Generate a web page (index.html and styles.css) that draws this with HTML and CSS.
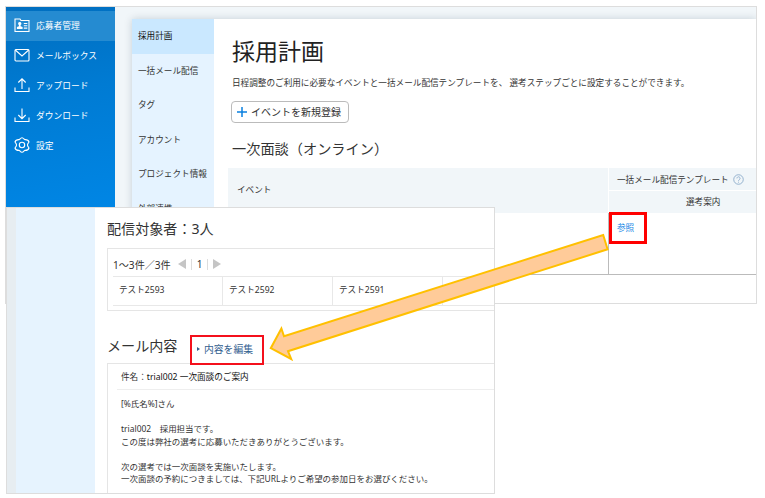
FILE: index.html
```html
<!DOCTYPE html>
<html lang="ja">
<head>
  <meta charset="UTF-8">
  <meta name="viewport" content="width=device-width, initial-scale=1.0">
  <title>採用計画</title>
  <link rel="stylesheet" href="styles.css">
</head>
<body>
  <div class="window plan">
    <nav class="sidebar">
      <a class="nav-item active">
        <svg viewBox="0 0 16 16"><path d="M1 2h5l1 1.5h8v11H1z"/><path d="M9.8 6.5h3.5M9.8 8.8h3.5M9.8 11.1h3.5"/><path class="solid" d="M5.7 5a1.6 1.6 0 0 1 .9 3v1.2l2 .8v2H2.9v-2l2-.8V8a1.6 1.6 0 0 1 .8-3z"/></svg>
        応募者管理
      </a>
      <a class="nav-item">
        <svg viewBox="0 0 16 16"><rect x="1" y="2.5" width="14" height="11.5" rx="1"/><path d="M1.3 3l6.7 6 6.7-6"/></svg>
        メールボックス
      </a>
      <a class="nav-item">
        <svg viewBox="0 0 16 16"><path d="M1 10.5v4h14v-4M8 12V2M4.3 5.5L8 1.8l3.7 3.7"/></svg>
        アップロード
      </a>
      <a class="nav-item">
        <svg viewBox="0 0 16 16"><path d="M1 10.5v4h14v-4M8 1.5v10M4.3 8L8 11.7 11.7 8"/></svg>
        ダウンロード
      </a>
      <a class="nav-item">
        <svg viewBox="0 0 16 16"><path d="M6 2Q8-.6 10 2L11 2.6Q14.3 2.5 15 5L13.6 7.2V8.8L15 11Q14.3 13.5 11 13.4L10 14Q8 16.6 6 14L5 13.4Q1.7 13.5 1 11L2.4 8.8V7.2L1 5Q1.7 2.5 5 2.6z"/><circle cx="8" cy="8" r="2.7"/></svg>
        設定
      </a>
    </nav>
    <div class="panel">
      <ul class="submenu">
        <li class="current">採用計画</li>
        <li>一括メール配信</li>
        <li>タグ</li>
        <li>アカウント</li>
        <li>プロジェクト情報</li>
        <li>外部連携</li>
      </ul>
      <main class="content">
        <h1>採用計画</h1>
        <p class="lead">日程調整のご利用に必要なイベントと一括メール配信テンプレートを、 選考ステップごとに設定することができます。</p>
        <button class="add-button">
          <svg viewBox="0 0 10 10"><path d="M5 0v10M0 5h10"/></svg>
          イベントを新規登録
        </button>
        <h2>一次面談（オンライン）</h2>
        <div class="event-table">
          <div class="event-head">イベント</div>
          <div class="template-head">
            <div class="template-title">一括メール配信テンプレート
              <svg viewBox="0 0 12 12"><circle cx="6" cy="6" r="5.2"/><path d="M4.3 4.8a1.7 1.7 0 1 1 2.6 1.4q-.9.5-.9 1.3M6 8.4v1"/></svg>
            </div>
            <div class="template-step">選考案内</div>
          </div>
          <div class="event-cell"></div>
          <div class="template-cell"><a class="link">参照</a></div>
        </div>
      </main>
    </div>
  </div>

  <div class="window mail">
    <div class="mail-side"></div>
    <div class="mail-main">
      <h3>配信対象者：3人</h3>
      <div class="targets">
        <div class="pager">
          <span>1～3件／3件</span>
          <i class="prev"></i>
          <span class="page">1</span>
          <i class="next"></i>
        </div>
        <div class="target-row">
          <span>テスト2593</span>
          <span>テスト2592</span>
          <span>テスト2591</span>
          <span></span>
        </div>
      </div>
      <div class="mail-heading">
        <h3>メール内容</h3>
        <a class="edit-link"><i></i>内容を編集</a>
      </div>
      <div class="mail-box">
        <div class="subject">件名：<b>trial002 一次面談のご案内</b></div>
        <div class="mail-text">[%氏名%]さん

trial002　採用担当です。
この度は弊社の選考に応募いただきありがとうございます。

次の選考では一次面談を実施いたします。
一次面談の予約につきましては、下記URLよりご希望の参加日をお選びください。</div>
      </div>
    </div>
  </div>

  <!-- highlight and arrow over both windows -->
  <div class="highlight"></div>
  <svg class="arrow" viewBox="0 0 765 498"><path d="M603.2 235L607.6 249.3 288 351.2 291.2 359 270.8 348.2 281.4 328.5 284 336.2z"/></svg>
</body>
</html>
```
FILE: styles.css
```css
* {
  box-sizing: border-box;
}
body {
  margin: 0;
  width: 765px;
  height: 498px;
  position: relative;
  overflow: hidden;
  background: #fff;
  color: #333;
  font-family: "Noto Sans", "Noto Sans CJK JP", sans-serif;
  font-size: 8.62px;
}
h1, h2, h3, p, ul {
  margin: 0;
  padding: 0;
  font-weight: normal;
}
svg {
  fill: none;
  stroke: currentColor;
  flex: none;
}
.window {
  position: absolute;
  display: flex;
  border: 1px solid #ddd;
  overflow: hidden;
}

/* plan window */
.plan {
  left: 5px;
  top: 6px;
  width: 752px;
  height: 298px;
  background: #f1f6f9;
}
.sidebar {
  width: 109px;
  padding-top: 4px;
  background: linear-gradient(170deg, #006ebf, #007bd3 30%, #0086e5 70%);
  color: #fff;
}
.nav-item {
  display: flex;
  align-items: center;
  gap: 6px;
  height: 30px;
  padding: 0 0 2px 8px;
  font-size: 8.75px;
  white-space: nowrap;
}
.nav-item svg {
  width: 16px;
  height: 16px;
  stroke-width: 1.1;
}
.nav-item.active {
  background: #258bd1;
}
.solid {
  fill: #fff;
  stroke: none;
}
.panel {
  display: flex;
  flex: 1;
  margin: 12px 0 0 17px;
  background: #fff;
  box-shadow: 0 0 8px rgba(0, 40, 60, .18);
}
.submenu {
  width: 82px;
  background: #e5f3ff;
  list-style: none;
}
.submenu li {
  height: 34.5px;
  padding-left: 6px;
  line-height: 34px;
  white-space: nowrap;
}
.submenu .current {
  background: #cae8ff;
  color: #111;
}
.content {
  flex: 1;
  padding: 16px 0 0 14px;
}
.content h1 {
  padding-left: 4px;
  font-size: 23px;
  line-height: 32px;
  color: #222;
}
.lead {
  margin-top: 9px;
  padding-left: 4px;
  line-height: 14px;
  white-space: nowrap;
}
.add-button {
  display: flex;
  align-items: center;
  gap: 4px;
  width: 118px;
  height: 22px;
  margin: 11px 0 0 3px;
  padding: 0 0 1px 5px;
  border: 1px solid #bbb;
  border-radius: 4px;
  background: #fff;
  color: #333;
  font: inherit;
  font-size: 10px;
  white-space: nowrap;
}
.add-button svg {
  width: 10px;
  height: 10px;
  stroke: #0a80e0;
  stroke-width: 1.5;
}
.content h2 {
  margin-top: 15px;
  padding-left: 4px;
  font-size: 14.2px;
  line-height: 22px;
}
.event-table {
  display: grid;
  grid-template-columns: 380px 1fr;
  grid-template-rows: 45px 62px;
  margin-top: 8px;
}
.event-head {
  padding-left: 9px;
  line-height: 45px;
  background: #f1f6f9;
}
.template-head {
  border-left: 1px solid #fff;
  background: #f1f6f9;
}
.template-title {
  display: flex;
  align-items: center;
  gap: 4px;
  height: 23px;
  padding-left: 8px;
  border-bottom: 1px solid #fff;
  white-space: nowrap;
}
.template-title svg {
  width: 11px;
  height: 11px;
  color: #8caccb;
}
.template-step {
  padding-left: 77px;
  line-height: 22px;
}
.event-cell, .template-cell {
  border-bottom: 1px solid #bbb;
}
.template-cell {
  padding: 8px 0 0 8px;
  border-left: 1px solid #bbb;
}
.link {
  color: #1485e5;
  line-height: 14px;
}

/* mail window */
.mail {
  left: 6px;
  top: 207px;
  width: 489px;
  height: 287px;
  background: #fff;
}
.mail-side {
  flex: none;
  width: 88px;
  border-left: 9px solid #e7edf1;
  background: #e6f3fe;
}
.mail-main {
  flex: 1;
  padding: 10px 0 0 12px;
}
.mail-main h3 {
  font-size: 14.1px;
  line-height: 22px;
}
.targets {
  height: 63px;
  margin-top: 8px;
  padding-left: 5px;
  border: 1px solid #e5e5e5;
  border-right: 0;
}
.pager {
  display: flex;
  align-items: center;
  height: 27px;
  padding-top: 3px;
  font-size: 10.1px;
}
.page {
  margin: 0 5px;
  padding: 0 5px;
  border: solid #ddd;
  border-width: 0 1px;
  line-height: 11px;
}
.prev, .next {
  border: solid transparent;
  border-width: 5px 0;
}
.prev {
  margin-left: 7px;
  border-right: 8px solid #c5c5c5;
}
.next {
  border-left: 8px solid #c5c5c5;
}
.target-row {
  display: flex;
  height: 30px;
  border: solid #e8e8e8;
  border-width: 1px 0;
}
.target-row span {
  width: 110px;
  padding-left: 6px;
  border-right: 1px solid #e8e8e8;
  line-height: 27px;
}
.target-row span:last-child {
  flex: 1;
  border-right: 0;
}
.mail-heading {
  display: flex;
  margin-top: 24px;
}
.mail-heading h3 {
  width: 83px;
  line-height: 22px;
}
.edit-link {
  display: flex;
  align-items: center;
  width: 74px;
  height: 30px;
  padding: 0 0 3px 5px;
  border: 2px solid #f4101c;
  font-size: 9.8px;
  color: #33608f;
}
.edit-link i {
  margin-right: 4px;
  border: solid transparent;
  border-width: 2.5px 0;
  border-left: 3px solid #33608f;
}
.mail-box {
  height: 140px;
  margin-top: -2px;
  padding-left: 9px;
  border: 1px solid #e5e5e5;
  border-right: 0;
}
.subject {
  height: 26px;
  padding-left: 4px;
  border-bottom: 1px solid #eee;
  line-height: 27px;
}
.subject b {
  font-weight: normal;
  color: #111;
}
.mail-text {
  padding: 8px 0 0 4px;
  font-size: 8.48px;
  line-height: 12.5px;
  white-space: pre;
}

.highlight {
  position: absolute;
  left: 609px;
  top: 212px;
  width: 38px;
  height: 32px;
  border: 3px solid #f00;
}
.arrow {
  position: absolute;
  left: 0;
  top: 0;
  width: 765px;
  height: 498px;
  fill: #ffcb99;
  stroke: #ffc000;
  stroke-width: 2;
}
```
